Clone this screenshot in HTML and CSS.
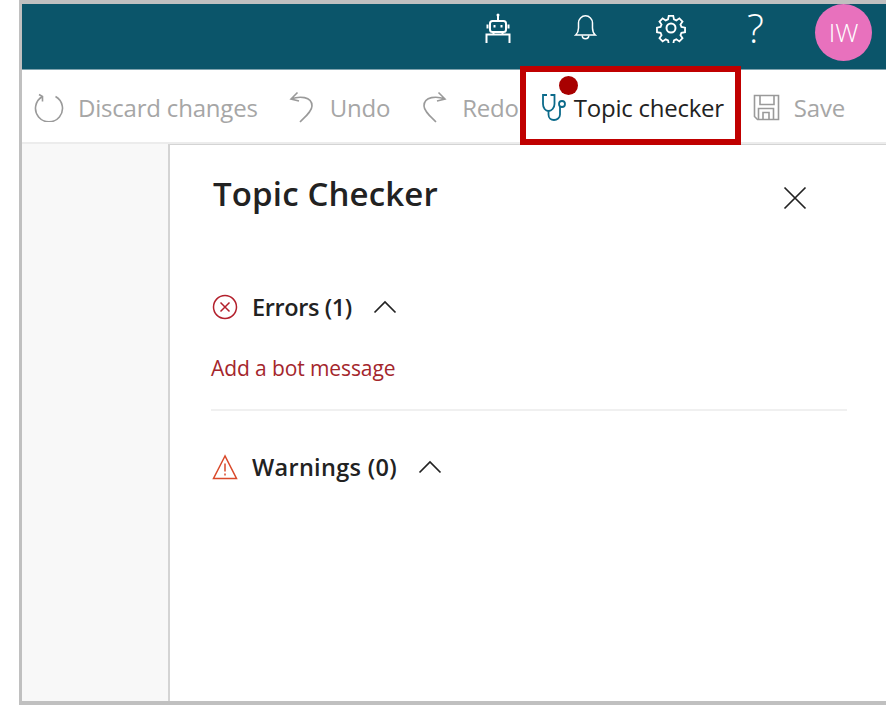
FILE: index.html
```html
<!DOCTYPE html>
<html lang="en">
<head>
    <meta charset="UTF-8">
    <title>Topic Checker</title>
    <link rel="stylesheet" href="styles.css">
</head>
<body>
    <div class="frame">
        <div class="topbar">
            <svg class="top-icon bot" viewBox="0 0 26 30" fill="none" stroke="#fff" stroke-width="2">
                <path d="M13 2v6"/>
                <circle cx="13" cy="2" r="1.500" fill="#fff" stroke="none"/>
                <rect x="5" y="8" width="16" height="11" rx="2.500"/>
                <path d="M2.500 11.500v4M23.500 11.500v4M9.500 12v2.500M16.500 12v2.500"/>
                <path d="M8.500 19v2.500M17.500 19v2.500M1.500 30v-8.500h23V30"/>
            </svg>
            <svg class="top-icon bell" viewBox="0 0 24 29" fill="none" stroke="#fff" stroke-width="1.600">
                <path d="M1.500 22.500c2.500-2.500 3-4 3-7.500V9.500a7.500 7.500 0 0 1 15 0V15c0 3.500.5 5 3 7.500z"/>
                <path d="M8.500 23a3.500 3.500 0 0 0 7 0"/>
            </svg>
            <svg class="top-icon gear" viewBox="0 0 30 30" fill="none" stroke="#fff" stroke-width="2">
                <circle cx="15" cy="15" r="4.500"/>
                <path d="M12.500 1.500h5l.8 4 2.600 1.100 3.400-2.300 3.500 3.500-2.300 3.400 1.100 2.600 4 .8v5l-4 .8-1.100 2.600 2.300 3.400-3.500 3.500-3.400-2.300-2.600 1.100-.8 4h-5l-.8-4-2.600-1.100-3.400 2.300-3.500-3.500 2.300-3.400-1.100-2.600-4-.8v-5l4-.8 1.100-2.600-2.300-3.400 3.500-3.500 3.400 2.300 2.600-1.100z" transform="translate(1.500 1.500) scale(.9)"/>
            </svg>
            <span class="help">?</span>
            <span class="avatar">IW</span>
        </div>
        <div class="toolbar">
            <span class="tool discard">
                <svg class="tool-icon" viewBox="0 0 30 30" fill="none" stroke="#9a9a9a" stroke-width="1.600">
                    <path d="M8.500 4.500a13.500 13.500 0 1 0 13 0M5 2.500l3.500 2v5"/>
                </svg>
                Discard changes
            </span>
            <span class="tool">
                <svg class="tool-icon undo" viewBox="0 0 26 32" fill="none" stroke="#9a9a9a" stroke-width="1.600">
                    <path d="M8.500 1.500 2 8l8 2M2 8c8-3 21-3 21 7 0 5-6 10-12 16"/>
                </svg>
                Undo
            </span>
            <span class="tool redo">
                <svg class="tool-icon undo" viewBox="0 0 26 32" fill="none" stroke="#9a9a9a" stroke-width="1.600">
                    <path d="M17.500 1.500 24 8l-8 2M24 8C16 5 3 5 3 15c0 5 6 10 12 16"/>
                </svg>
                Redo
            </span>
            <span class="tool checker">
                <span class="dot"></span>
                <svg class="scope" viewBox="0 0 27 27" fill="none" stroke="#0b6a8a" stroke-width="1.800">
                    <path d="M6 1H2v9c0 4 2.500 7 5.500 7s6-3 6-7V1H9.500"/>
                    <path d="M7.500 17v3.500c0 3.500 2.500 5.500 5.500 5.500s6-2 6-5.500V13"/>
                    <circle cx="21" cy="10" r="3"/>
                </svg>
                Topic checker
            </span>
            <span class="tool save-tool">
                <svg class="tool-icon save" viewBox="0 0 27 27" fill="none" stroke="#9a9a9a" stroke-width="1.600">
                    <path d="M1.500 1.500h24v24H4.500l-3-3z"/>
                    <path d="M7 1.500v9h14v-9M5.500 25.500v-11h15v11M10 25.500v-7h6v7"/>
                </svg>
                Save
            </span>
        </div>
        <div class="content">
            <div class="sidebar"></div>
            <div class="panel">
                <div class="panel-head">
                    <h1>Topic Checker</h1>
                    <svg class="close" viewBox="0 0 24 24" fill="none" stroke="#222" stroke-width="1.700">
                        <path d="M1.500 1.500l21 21M22.500 1.500l-21 21"/>
                    </svg>
                </div>
                <div class="section errors">
                    <svg class="status" viewBox="0 0 26 26" fill="none" stroke="#b3202c" stroke-width="1.500">
                        <circle cx="13" cy="13" r="11.500"/>
                        <path d="M8.500 8.500l9 9M17.500 8.500l-9 9"/>
                    </svg>
                    <span>Errors (1)</span>
                    <svg class="chevron" viewBox="0 0 24 14" fill="none" stroke="#222" stroke-width="1.700">
                        <path d="M1.500 12.500 12 2l10.500 10.500"/>
                    </svg>
                </div>
                <div class="message">Add a bot message</div>
                <div class="section warnings">
                    <svg class="status" viewBox="0 0 26 26" fill="none" stroke="#d9492a" stroke-width="1.500">
                        <path d="M13 2 1.500 24.500h23z"/>
                        <path d="M13 9.500v8M13 19.500v2"/>
                    </svg>
                    <span>Warnings (0)</span>
                    <svg class="chevron" viewBox="0 0 24 14" fill="none" stroke="#222" stroke-width="1.700">
                        <path d="M1.500 12.500 12 2l10.500 10.500"/>
                    </svg>
                </div>
            </div>
        </div>
        <div class="highlight"></div>
    </div>
</body>
</html>
```

FILE: styles.css
```css
html, body {
    margin: 0;
    height: 100%;
    background: #fff;
    overflow: hidden;
}

.frame {
    position: relative;
    box-sizing: border-box;
    display: flex;
    flex-direction: column;
    height: 705px;
    margin-left: 19px;
    border-left: 3px solid #c0c0c0;
    border-top: 4px solid #c0c0c0;
    border-bottom: 4px solid #c0c0c0;
    font-family: "Open Sans", "Noto Sans", sans-serif;
}

.topbar {
    flex: none;
    position: relative;
    height: 66px;
    background: #0b556a;
    border-bottom: 1px solid #7fa3ae;
    box-sizing: border-box;
}

.top-icon {
    position: absolute;
}

.bot {
    left: 463px;
    top: 9px;
    width: 26px;
    height: 30px;
}

.bell {
    left: 552px;
    top: 10px;
    width: 23px;
    height: 27px;
}

.gear {
    left: 634px;
    top: 9px;
    width: 30px;
    height: 30px;
}

.help {
    position: absolute;
    left: 725px;
    top: 0;
    color: #fff;
    font-size: 40px;
    font-weight: 300;
    line-height: 48px;
}

.avatar {
    position: absolute;
    left: 793px;
    top: 0;
    width: 57px;
    height: 57px;
    border-radius: 50%;
    background: #e871bd;
    color: #fff;
    font-size: 26px;
    font-weight: 300;
    line-height: 57px;
    text-align: center;
}

.toolbar {
    flex: none;
    display: flex;
    align-items: center;
    height: 74px;
    padding: 2px 0 0 12px;
    box-sizing: border-box;
    border-bottom: 2px solid #ececec;
}

.tool {
    display: flex;
    align-items: center;
    gap: 15px;
    margin-right: 31px;
    color: #a6a6a6;
    font-size: 24px;
    letter-spacing: -0.2px;
    white-space: nowrap;
}

.discard {
    gap: 14px;
}

.redo {
    margin-right: 22px;
}

.tool-icon {
    width: 30px;
    height: 30px;
}

.undo {
    width: 26px;
    height: 32px;
}

.save {
    width: 27px;
    height: 27px;
}

.save-tool {
    gap: 14px;
}

.checker {
    position: relative;
    gap: 6px;
    color: #222;
    margin-right: 29px;
    letter-spacing: -0.25px;
}

.scope {
    width: 27px;
    height: 27px;
}

.dot {
    position: absolute;
    left: 18px;
    top: -15px;
    width: 19px;
    height: 19px;
    border-radius: 50%;
    background: #a80000;
}

.content {
    flex: 1;
    display: flex;
    min-height: 0;
}

.sidebar {
    flex: none;
    width: 146px;
    background: #f8f8f8;
    border-right: 2px solid #d4d4d4;
}

.panel {
    flex: 1;
    padding: 0 39px 0 41px;
    border-top: 1px solid #d4d4d4;
}

.panel-head {
    display: flex;
    align-items: center;
    justify-content: space-between;
    height: 100px;
    padding: 0 40px 0 2px;
}

h1 {
    margin: -4px 0 0;
    color: #222;
    font-size: 33px;
    font-weight: 600;
    letter-spacing: 0.15px;
}

.close {
    width: 24px;
    height: 24px;
    margin-top: 6px;
}

.section {
    display: flex;
    align-items: center;
    color: #222;
    font-size: 23.5px;
    font-weight: 600;
}

.errors {
    margin-top: 46px;
    letter-spacing: -0.4px;
}

.status {
    width: 26px;
    height: 26px;
    margin: 0 14px 0 1px;
}

.chevron {
    width: 24px;
    height: 14px;
    margin-left: 21px;
}

.message {
    padding: 31px 0 27px;
    border-bottom: 2px solid #f0f0f0;
    color: #a4262c;
    font-size: 21px;
    letter-spacing: -0.1px;
}

.warnings {
    margin-top: 40px;
    letter-spacing: 0.3px;
}

.highlight {
    position: absolute;
    left: 498px;
    top: 62px;
    width: 221px;
    height: 79px;
    box-sizing: border-box;
    border: 6px solid #c00000;
}
```
